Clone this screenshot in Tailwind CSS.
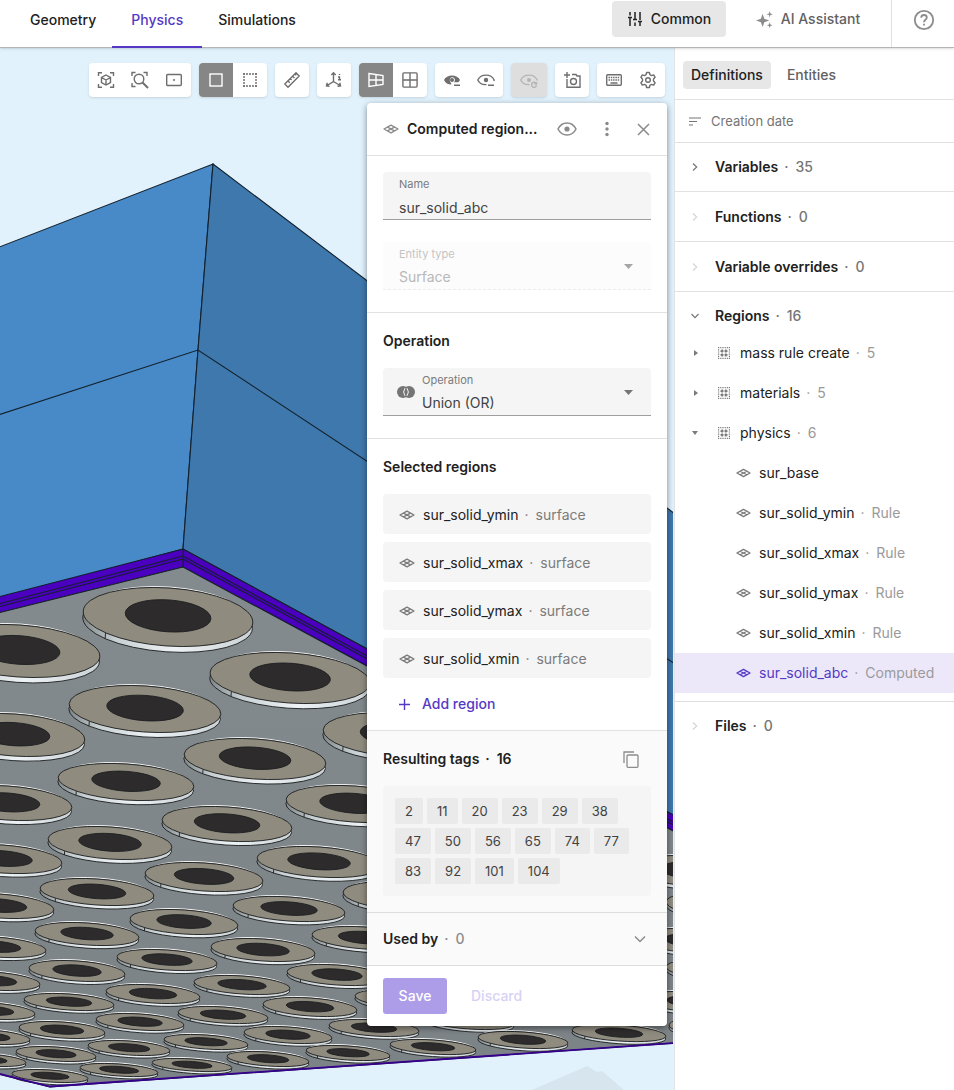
<!DOCTYPE html>
<html lang="en">
  <head>
    <meta charset="UTF-8" />
    <meta name="viewport" content="width=device-width, initial-scale=1.0" />
    <title>Physics - Computed region</title>
    <script src="https://cdn.jsdelivr.net/npm/@tailwindcss/browser@4"></script>
    <style>
      body {
        font-family: "Inter", "Liberation Sans", sans-serif;
      }
    </style>
  </head>
  <body class="bg-white text-[#212121] text-sm">
    <!-- Shared icons -->
    <svg class="hidden">
      <symbol id="surface" viewBox="0 0 16 10">
        <path d="M1 5 8 1.2 15 5 8 8.8ZM4.5 3.1 11.5 6.9M11.5 3.1 4.5 6.9" fill="none" stroke="currentColor" stroke-width="1.4" stroke-linejoin="round" />
      </symbol>
      <symbol id="group" viewBox="0 0 12 12">
        <path d="M0 .6H12M0 11.4H12M.6 0V12M11.4 0V12" fill="none" stroke="currentColor" stroke-width="1.2" stroke-dasharray="1.2 1" />
        <path d="M2.5 4.200H9.500M2.500 7.800H9.500M4.200 2.500V9.500M7.800 2.500V9.500" fill="none" stroke="currentColor" stroke-width="1.8" stroke-dasharray="3 1" />
      </symbol>
      <symbol id="chevron" viewBox="0 0 12 12">
        <path d="M4 2.5 7.7 6 4 9.5" fill="none" stroke="currentColor" stroke-width="1.2" />
      </symbol>
      <symbol id="eye" viewBox="0 0 20 14">
        <path d="M1 7C3 3 6.200 1 10 1S17 3 19 7C17 11 13.800 13 10 13S3 11 1 7Z" fill="none" stroke="currentColor" stroke-width="1.5" />
        <circle cx="10" cy="7" r="2.600" fill="currentColor" />
      </symbol>
    </svg>

    <div class="flex min-h-screen flex-col">
      <!-- Top bar -->
      <header class="relative z-10 flex h-12 items-stretch border-b border-[#b5b5b5] bg-white pl-[14px] font-medium shadow-sm">
        <nav class="flex">
          <a href="#" class="flex h-12 items-center px-4 pb-2">Geometry</a>
          <a href="#" class="flex h-12 min-w-[90px] items-center justify-center border-b-2 border-[#5539c4] px-4 pb-1.5 text-[#5539c4]">Physics</a>
          <a href="#" class="flex h-12 items-center px-4 pb-2">Simulations</a>
        </nav>
        <div class="ml-auto flex">
          <button class="mt-px flex h-9 w-[114px] items-center justify-center gap-2 rounded bg-[#e7e7e7]">
            <svg class="h-4 w-4" viewBox="0 0 16 16" fill="none" stroke="currentColor" stroke-width="1.500"><path d="M3 1V4.500M3 6.500V15M8 1V8.500M8 11.500V15M13 1V9M13 11V15M1 6.500H5M6 8.500H10M11 10.500H15" /></svg>
            Common
          </button>
          <button class="mt-px ml-3 flex h-9 w-[140px] items-center justify-center gap-2 text-[#616161]">
            <svg class="h-[17px] w-[17px] text-[#8c8c8c]" viewBox="0 0 18 18" fill="currentColor"><path d="M7 3 8.800 8.200 14 10 8.800 11.800 7 17 5.200 11.800 0 10 5.200 8.200ZM14.500 0 15.300 2.700 18 3.500 15.300 4.300 14.500 7 13.700 4.300 11 3.500 13.700 2.700ZM14.500 12 15.300 14.200 17.500 15 15.300 15.800 14.500 18 13.700 15.800 11.500 15 13.700 14.200Z" /></svg>
            AI Assistant
          </button>
          <div class="ml-[13px] flex w-[63px] border-l border-[#e0e0e0] pb-2 pl-[2px]">
            <button aria-label="Help" class="m-auto text-[#8c8c8c]">
              <svg class="h-[22px] w-[22px]" viewBox="0 0 22 22" fill="none" stroke="currentColor" stroke-width="1.800"><circle cx="11" cy="11" r="9.200" /><path d="M8.200 8.700C8.200 5 13.800 5.200 13.800 8.500 13.800 10.800 11 10.800 11 13.200M11 14.700V16.600" /></svg>
            </button>
          </div>
        </div>
      </header>

      <div class="flex flex-1">
        <!-- 3D view -->
        <main class="relative min-w-0 flex-1 overflow-hidden bg-[#e1f2fd]">
          <svg class="absolute left-0 top-0" width="673" height="1042" viewBox="0 48 673 1042" aria-hidden="true">
            <defs>
              <linearGradient id="rim" x1="0" x2="1">
                <stop offset="0" stop-color="#7e8587" />
                <stop offset=".2" stop-color="#c8cfd2" />
                <stop offset=".55" stop-color="#edf3f5" />
                <stop offset="1" stop-color="#cbd2d5" />
              </linearGradient>
              <linearGradient id="floor" x1="0" x2="0" y1="0" y2="1">
                <stop offset="0" stop-color="#848b8e" />
                <stop offset="1" stop-color="#7c8386" />
              </linearGradient>
            </defs>
            <path d="M532 1090 587 1066 597 1072 602 1071 624 1090Z" fill="#d7e5ee" />
            <g stroke="#14202b" stroke-width="1.100">
              <path d="M-2 247.500 213 164 198 350 183 549 -2 599Z" fill="#478ac7" />
              <path d="M213 164 675 514V816L183 549 198 350Z" fill="#3e78ad" />
              <path d="M-2 415 198 350 675 664" fill="none" />
              <path d="M-2 597 183 549 675 816V832L183 567 -2 613Z" fill="#4a00be" />
              <path d="M-2 604 183 556 675 823M-2 607 183 559 675 826M183 549V567" fill="none" />
              <path d="M-2 613 183 567 675 832V1043L50 1087 -2 1074Z" fill="url(#floor)" />
            </g>
            <g id="discs"></g>
            <path d="M-2 1073.500 50 1086.500 675 1043" fill="none" stroke="#35008c" stroke-width="1.800" />
          </svg>

          <div class="relative flex flex-col items-end pt-[15px] pl-2">
            <!-- Toolbar -->
            <div class="mr-[9px] flex gap-2 text-[#6e6e6e] [&>div]:flex [&>div]:h-[34px] [&>div]:overflow-hidden [&>div]:rounded [&>div]:bg-white [&>div]:shadow [&_button]:flex [&_button]:w-[34px] [&_button]:items-center [&_button]:justify-center [&_svg]:h-[18px] [&_svg]:w-[18px] [&_svg]:fill-none [&_svg]:stroke-current [&_svg]:stroke-[1.4]">
              <div>
                <button aria-label="Fit view"><svg viewBox="0 0 18 18"><path d="M1.500 5V1.700H5M13 1.700H16.500V5M16.500 13V16.300H13M5 16.300H1.500V13M9 4 13.500 6.500V11.500L9 14 4.500 11.500V6.500ZM4.500 6.500 9 9 13.500 6.500M9 9V14" /></svg></button>
                <button aria-label="Zoom to area"><svg viewBox="0 0 18 18"><path d="M1 5V1.500H4.500M12.500 1.500H16V5M4.500 15.500H1V12" /><circle cx="8" cy="8" r="4.800" /><path d="M11.500 11.500 17 17" stroke-width="2" /></svg></button>
                <button aria-label="Center"><svg viewBox="0 0 18 18"><rect x="1.700" y="3.500" width="14.600" height="11" rx="1" /><circle cx="9" cy="9" r=".4" /></svg></button>
              </div>
              <div>
                <button aria-label="Solid selection" class="bg-[#868686] text-white"><svg viewBox="0 0 18 18"><rect x="3" y="3" width="12" height="12" /></svg></button>
                <button aria-label="Box selection"><svg viewBox="0 0 18 18"><path d="M2 3H16M2 15H16M3 2V16M15 2V16" stroke-dasharray="2 1" /></svg></button>
              </div>
              <div>
                <button aria-label="Measure"><svg viewBox="0 0 18 18"><path d="M1.800 13 13 1.800 16.200 5 5 16.200ZM5 10 6.800 11.800M7.300 7.600 8.600 8.900M9.600 5.300 11.400 7.100M12 3 13.300 4.300" /></svg></button>
              </div>
              <div>
                <button aria-label="Axes"><svg viewBox="0 0 18 18"><path d="M8.500 2V10.500L2 14.500M8.500 10.500 15 14.500M6.300 4 8.500 1.800 10.700 4M4.500 15.200 1.500 14.800 2.300 11.800M12.500 15.200 15.500 14.800 14.700 11.800M14.500 3V4M13 6H14.500V8.500M13 8.800H16" /></svg></button>
              </div>
              <div>
                <button aria-label="Perspective" class="bg-[#868686] text-white"><svg viewBox="0 0 18 18"><path d="M2 2.500 16 4.500V13.500L2 15.500ZM2 9H16M9 3.500V14.500" /></svg></button>
                <button aria-label="Orthographic"><svg viewBox="0 0 18 18"><rect x="1.900" y="1.900" width="14.200" height="14.200" rx="1" /><path d="M2 9H16M9 2V16" /></svg></button>
              </div>
              <div>
                <button aria-label="Hide selected"><svg viewBox="0 0 18 18"><path d="M1 9C3.500 3 14.500 3 17 9 16.500 10.200 15.500 11 15 11.200H11C13 9 11.500 6 9 6.200 6.500 6.500 6 10 8.200 12.200V13.500C5 13.500 2.300 12 1 9Z" fill="currentColor" stroke-width="0" /><circle cx="9" cy="9" r="2" fill="currentColor" stroke-width="0" /><path d="M11 14.300H17" /></svg></button>
                <button aria-label="Hide others"><svg viewBox="0 0 18 18"><path d="M16.800 10 17.200 9C14 2.500 4 2.500.8 9 2.400 12.500 5.500 14 9.500 13.600" /><circle cx="9" cy="9" r="2.200" fill="currentColor" stroke-width="0" /><path d="M11 14.300H17" /></svg></button>
              </div>
              <div class="bg-[#dedede]!">
                <button aria-label="Reset visibility" disabled class="w-9! text-[#b5b5b5]"><svg viewBox="0 0 18 18"><path d="M16.800 9.500 17.200 9C14 2.500 4 2.500.8 9 2.400 12.500 5.500 14 9.500 13.600" /><circle cx="9" cy="9" r="2" fill="currentColor" stroke-width="0" /><path d="M16 12.200A2.500 2.500 0 1 0 16.500 14.500M16.500 11V13H14.500" /></svg></button>
              </div>
              <div>
                <button aria-label="Screenshot"><svg viewBox="0 0 18 18"><path d="M4 8V16.200H17V5H14L13 3.500H9M1 4H7M4 1V7" /><circle cx="10.500" cy="10.500" r="3" /></svg></button>
              </div>
              <div>
                <button aria-label="Shortcuts"><svg viewBox="0 0 18 18"><rect x="1.700" y="3.700" width="14.600" height="10.600" rx="1" /><path d="M3.500 6.500H14.500M3.500 9H14.500" stroke-dasharray="1.500 .8" /><path d="M5.500 12H12.500" /></svg></button>
                <button aria-label="Settings"><svg viewBox="0 0 18 18"><path d="M7.600 1.500H10.400L10.900 3.700 12.500 4.600 14.700 3.900 16.100 6.300 14.500 7.900V10.100L16.100 11.700 14.700 14.100 12.500 13.400 10.900 14.300 10.400 16.500H7.600L7.100 14.300 5.500 13.400 3.300 14.100 1.900 11.700 3.500 10.100V7.900L1.900 6.300 3.300 3.900 5.500 4.600 7.100 3.700Z" stroke-linejoin="round" /><circle cx="9" cy="9" r="2.300" /></svg></button>
              </div>
            </div>

            <!-- Region form -->
            <form class="mt-1.5 mr-[7px] w-[300px] rounded bg-white shadow-[0_2px_6px_rgba(0,0,0,0.45)]">
              <div class="flex h-[53px] items-center border-b border-[#e2e2e2] px-4 text-[#8a8a8a]">
                <svg class="h-[10px] w-4"><use href="#surface" /></svg>
                <h2 class="ml-2 w-[132px] whitespace-nowrap font-semibold text-[#212121]">Computed region...</h2>
                <button type="button" aria-label="Visibility" class="ml-4.5"><svg class="h-[14px] w-5"><use href="#eye" /></svg></button>
                <button type="button" aria-label="More" class="ml-7"><svg class="h-4 w-1" viewBox="0 0 4 16" fill="currentColor"><circle cx="2" cy="2.500" r="1.700" /><circle cx="2" cy="8" r="1.700" /><circle cx="2" cy="13.500" r="1.700" /></svg></button>
                <button type="button" aria-label="Close" class="ml-auto"><svg class="h-[15px] w-[15px]" viewBox="0 0 15 15" fill="none" stroke="currentColor" stroke-width="1.500"><path d="M2 2 13 13M13 2 2 13" /></svg></button>
              </div>

              <div class="flex flex-col gap-[22px] border-b border-[#e2e2e2] px-4 pt-4 pb-[22px]">
                <div class="flex h-12 flex-col rounded-t border-b border-[#9e9e9e] bg-[#f5f5f5] px-4 pt-1">
                  <label for="name" class="text-[11px] leading-4 text-[#7b7b7b]">Name</label>
                  <input id="name" value="sur_solid_abc" class="mt-1 h-[22px] w-full text-[#424242] outline-none" />
                </div>
                <div class="relative flex h-12 flex-col rounded-t border-b border-dashed border-[#ececec] bg-[#fcfcfc] px-4 pt-1">
                  <label for="entity" class="text-[11px] leading-4 text-[#c4c4c4]">Entity type</label>
                  <select id="entity" disabled class="mt-1 h-[22px] w-full appearance-none text-[#b8b8b8] opacity-100">
                    <option>Surface</option>
                  </select>
                  <svg class="pointer-events-none absolute top-[22px] right-[18px] h-[5px] w-[9px] text-[#a6a6a6]" viewBox="0 0 9 5"><path d="M0 0H9L4.500 5Z" fill="currentColor" /></svg>
                </div>
              </div>

              <div class="border-b border-[#e2e2e2] px-4 pt-[18px] pb-[22px]">
                <h3 class="font-semibold leading-5">Operation</h3>
                <div class="relative mt-[17px] flex h-12 flex-col rounded-t border-b border-[#9e9e9e] bg-[#f5f5f5] pt-1 pr-4 pl-[39px]">
                  <svg class="absolute top-[18px] left-[14px] h-3 w-[18px] text-[#757575]" viewBox="0 0 18 12"><circle cx="6" cy="6" r="6" fill="currentColor" /><circle cx="12" cy="6" r="6" fill="currentColor" /><path d="M8 2.200Q5.200 6 8 9.800M10 2.200Q12.800 6 10 9.800" fill="none" stroke="#f5f5f5" /></svg>
                  <label for="operation" class="text-[11px] leading-4 text-[#7b7b7b]">Operation</label>
                  <select id="operation" class="mt-1 h-[22px] w-full appearance-none text-[#424242] outline-none">
                    <option>Union (OR)</option>
                  </select>
                  <svg class="pointer-events-none absolute top-[22px] right-[18px] h-[5px] w-[9px] text-[#757575]" viewBox="0 0 9 5"><path d="M0 0H9L4.500 5Z" fill="currentColor" /></svg>
                </div>
              </div>

              <div class="border-b border-[#e2e2e2] px-4 pt-[18px] pb-2">
                <h3 class="font-semibold leading-5">Selected regions</h3>
                <ul class="mt-[17px] flex flex-col gap-2 [&>li]:flex [&>li]:h-10 [&>li]:items-center [&>li]:rounded [&>li]:bg-[#f5f5f5] [&>li]:px-4 [&>li]:pt-px [&_svg]:mr-2 [&_svg]:h-[10px] [&_svg]:w-4 [&_svg]:text-[#7b7b7b] [&_span]:ml-1.5 [&_span]:text-[#7b7b7b]">
                  <li><svg><use href="#surface" /></svg>sur_solid_ymin <span>·&ensp;surface</span></li>
                  <li><svg><use href="#surface" /></svg>sur_solid_xmax <span>·&ensp;surface</span></li>
                  <li><svg><use href="#surface" /></svg>sur_solid_ymax <span>·&ensp;surface</span></li>
                  <li><svg><use href="#surface" /></svg>sur_solid_xmin <span>·&ensp;surface</span></li>
                </ul>
                <button type="button" class="mt-2 flex h-9 items-center gap-3 px-4 font-medium text-[#5539c4]">
                  <svg class="h-[11px] w-[11px]" viewBox="0 0 11 11" stroke="currentColor" stroke-width="1.400"><path d="M5.500 0V11M0 5.500H11" /></svg>
                  Add region
                </button>
              </div>

              <div class="border-b border-[#dedede] bg-[#fafafa] px-4 pt-[18px] pb-4">
                <div class="flex items-center justify-between pr-3">
                  <h3 class="font-semibold leading-5">Resulting tags&thinsp; ·&ensp;16</h3>
                  <button type="button" aria-label="Copy tags" class="text-[#8c8c8c]"><svg class="h-[17px] w-4" viewBox="0 0 16 17" fill="none" stroke="currentColor" stroke-width="1.300"><path d="M1 12V1H11" /><rect x="4" y="4" width="11" height="12.300" rx="1" /></svg></button>
                </div>
                <div class="mt-[17px] flex flex-wrap gap-1 rounded bg-[#f5f5f5] p-3 text-[13px] text-[#424242] [&>span]:h-[26px] [&>span]:rounded-xs [&>span]:bg-[#eaeaea] [&>span]:px-[10px] [&>span]:leading-[26px]">
                  <span>2</span><span>11</span><span>20</span><span>23</span><span>29</span><span>38</span>
                  <span>47</span><span>50</span><span>56</span><span>65</span><span>74</span><span>77</span>
                  <span>83</span><span>92</span><span>101</span><span>104</span>
                </div>
              </div>

              <button type="button" class="flex h-[53px] w-full items-center border-b border-[#dedede] bg-[#fafafa] px-4 font-semibold">
                Used by <span class="ml-1.5 font-medium text-[#8c8c8c]">·&ensp;0</span>
                <svg class="mr-1 ml-auto h-[14px] w-[14px] text-[#8c8c8c]" viewBox="0 0 14 14" fill="none" stroke="currentColor" stroke-width="1.500"><path d="M2 4.500 7 9.500 12 4.500" /></svg>
              </button>

              <div class="flex gap-2 px-4 py-3 font-medium">
                <button class="h-9 w-16 rounded-[3px] bg-[#ad9de8] text-white" disabled>Save</button>
                <button type="button" class="h-9 px-4 text-[#d9d1f5]" disabled>Discard</button>
              </div>
            </form>
          </div>
        </main>

        <!-- Definitions sidebar -->
        <aside class="w-[280px] border-l border-[#dfe3e6] bg-white">
          <div class="flex h-[52px] items-center border-b border-[#e2e2e2] pt-[2px] pl-2 font-medium">
            <button class="h-7 rounded bg-[#e7e7e7] px-2">Definitions</button>
            <button class="h-7 px-4 text-[#616161]">Entities</button>
          </div>
          <button class="flex h-[43px] w-full items-center gap-[10px] border-b border-[#e2e2e2] pl-[14px] text-[13px] text-[#757575]">
            <svg class="h-[9px] w-3" viewBox="0 0 12 9" stroke="currentColor" stroke-width="1.200"><path d="M0 1H12M0 4.500H8M0 8H4" /></svg>
            Creation date
          </button>
          <div class="[&>button]:flex [&>button]:w-full [&>button]:items-center [&>button]:border-b [&>button]:border-[#e2e2e2] [&>button]:pl-[14px] [&>button]:font-semibold [&_svg]:mr-[14px] [&_svg]:h-3 [&_svg]:w-3 [&_span]:ml-1.5 [&_span]:font-medium [&_span]:text-[#757575]">
            <button class="h-[49px]"><svg class="text-[#757575]"><use href="#chevron" /></svg>Variables <span>·&ensp;35</span></button>
            <button class="h-[50px]"><svg class="text-[#d5d5d5]"><use href="#chevron" /></svg>Functions <span>·&ensp;0</span></button>
            <button class="h-[50px]"><svg class="text-[#d5d5d5]"><use href="#chevron" /></svg>Variable overrides <span>·&ensp;0</span></button>
          </div>
          <section class="border-b border-[#dedede] pb-2">
            <button class="flex w-full items-center pt-3 pb-[5px] pl-[14px] font-semibold leading-6">
              <svg class="mr-[14px] h-3 w-3 rotate-90 text-[#757575]"><use href="#chevron" /></svg>Regions <span class="ml-1.5 font-medium text-[#757575]">·&ensp;16</span>
            </button>
            <ul class="[&>li]:flex [&>li]:h-10 [&>li]:items-center [&>li]:whitespace-nowrap [&_svg]:text-[#7b7b7b] [&_span]:ml-1.5 [&_span]:text-[#9a9a9a]">
              <li class="pl-[19px]"><svg class="mr-5 h-1.5 w-1" viewBox="0 0 4 6"><path d="M0 0 4 3 0 6Z" fill="currentColor" /></svg><svg class="mr-2.5 h-3 w-3"><use href="#group" /></svg>mass rule create <span>·&ensp;5</span></li>
              <li class="pl-[19px]"><svg class="mr-5 h-1.5 w-1" viewBox="0 0 4 6"><path d="M0 0 4 3 0 6Z" fill="currentColor" /></svg><svg class="mr-2.5 h-3 w-3"><use href="#group" /></svg>materials <span>·&ensp;5</span></li>
              <li class="pl-[17px]"><svg class="mr-5 h-1 w-1.5" viewBox="0 0 6 4"><path d="M0 0H6L3 4Z" fill="currentColor" /></svg><svg class="mr-2.5 h-3 w-3"><use href="#group" /></svg>physics <span>·&ensp;6</span></li>
              <li class="pl-[61px]"><svg class="mr-2 h-[10px] w-[15px]"><use href="#surface" /></svg>sur_base</li>
              <li class="pl-[61px]"><svg class="mr-2 h-[10px] w-[15px]"><use href="#surface" /></svg>sur_solid_ymin <span>·&ensp;Rule</span></li>
              <li class="pl-[61px]"><svg class="mr-2 h-[10px] w-[15px]"><use href="#surface" /></svg>sur_solid_xmax <span>·&ensp;Rule</span></li>
              <li class="pl-[61px]"><svg class="mr-2 h-[10px] w-[15px]"><use href="#surface" /></svg>sur_solid_ymax <span>·&ensp;Rule</span></li>
              <li class="pl-[61px]"><svg class="mr-2 h-[10px] w-[15px]"><use href="#surface" /></svg>sur_solid_xmin <span>·&ensp;Rule</span></li>
              <li class="bg-[#ece8fa] pl-[61px] text-[#5539c4]"><svg class="mr-2 h-[10px] w-[15px] text-[#5539c4]!"><use href="#surface" /></svg>sur_solid_abc <span>·&ensp;Computed</span></li>
            </ul>
          </section>
          <button class="flex h-12 w-full items-center pl-[14px] font-semibold">
            <svg class="mr-[14px] h-3 w-3 text-[#d5d5d5]"><use href="#chevron" /></svg>Files <span class="ml-1.5 font-medium text-[#757575]">·&ensp;0</span>
          </button>
        </aside>
      </div>
    </div>

    <script>
      // Pads on the underside of the model: center x, center y, radius x, radius y
      const discs = [
        [168, 617, 85, 29], [19, 651, 81, 26], [290, 678, 80, 25], [145, 709, 76, 23],
        [14, 735, 71, 21], [398, 735, 75, 22], [255, 759, 71, 20], [126, 782, 68, 18],
        [7, 803, 65, 17], [354, 804, 68, 18], [227, 824, 65, 17], [110, 843, 62, 16],
        [2, 859, 60, 14], [319, 862, 62, 15], [204, 877, 59, 14], [97, 892, 57, 13],
        [-1, 906, 55, 12], [400, 896, 57, 14], [289, 909, 56, 12], [184, 922, 54, 12],
        [87, 934, 52, 11], [-5, 947, 51, 10], [365, 938, 53, 11], [263, 950, 52, 11],
        [167, 960, 50, 10], [77, 971, 48, 10], [-7, 981, 47, 9], [337, 975, 50, 10],
        [242, 985, 48, 9], [153, 994, 47, 9], [69, 1002, 45, 8], [-8, 1011, 43, 8],
        [402, 999, 47, 9], [310, 1007, 47, 9], [223, 1015, 45, 8], [140, 1022, 44, 8],
        [62, 1030, 43, 8], [-10, 1037, 40, 7], [374, 1028, 45, 8], [288, 1035, 44, 8],
        [206, 1042, 42, 7], [129, 1048, 41, 7], [56, 1054, 40, 7], [-12, 1060, 38, 6],
        [348, 1053, 42, 7], [268, 1059, 41, 7], [192, 1065, 40, 6], [119, 1070, 39, 6],
        [50, 1076, 38, 6], [469, 1021, 45, 8], [433, 1047, 43, 7], [523, 1040, 45, 8],
        [619, 1033, 47, 8], [700, 1027, 31, 8], [692, 1002, 50, 10], [714, 970, 48, 10],
        [692, 941, 54, 12], [714, 905, 48, 12], [690, 871, 58, 15],
      ];

      document.getElementById("discs").innerHTML = discs
        .map(([cx, cy, rx, ry]) => {
          const h = 1.5 + ry * 0.15;
          return `<g transform="translate(${cx} ${cy}) rotate(4)" stroke="#1d1f20" stroke-width="0.9">
            <ellipse cy="${h}" rx="${rx}" ry="${ry}" fill="url(#rim)" />
            <ellipse cy="-1" rx="${rx * 0.95}" ry="${ry}" fill="none" stroke="#fff" />
            <ellipse rx="${rx}" ry="${ry}" fill="#8f8b7f" />
            <path d="M${-rx * 0.72} ${ry * 0.7}v${h}" />
            <ellipse cy="${-ry * 0.04}" rx="${rx * 0.505}" ry="${ry * 0.55}" fill="#2d2b2c" />
          </g>`;
        })
        .join("");
    </script>
  </body>
</html>
